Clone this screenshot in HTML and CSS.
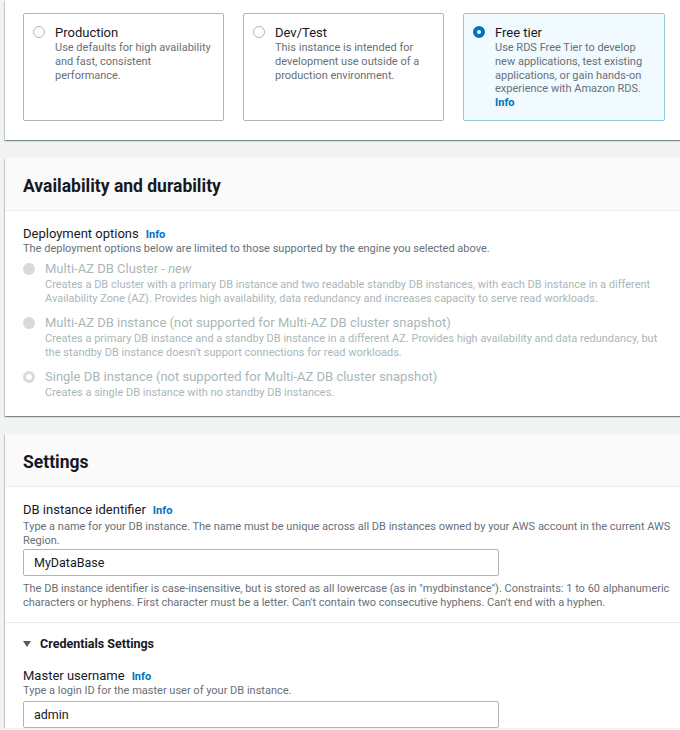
FILE: index.html
```html
<!DOCTYPE html>
<html>
<head>
<meta charset="utf-8">
<link rel="stylesheet" href="styles.css">
</head>
<body>
<div class="page">
  <section class="panel panel-top">
    <div class="tiles">
      <div class="tile">
        <span class="radio"></span>
        <div class="tile-text">
          <div class="tile-title">Production</div>
          <div class="tile-desc">Use defaults for high availability and fast, consistent performance.</div>
        </div>
      </div>
      <div class="tile">
        <span class="radio"></span>
        <div class="tile-text">
          <div class="tile-title">Dev/Test</div>
          <div class="tile-desc">This instance is intended for development use outside of a production environment.</div>
        </div>
      </div>
      <div class="tile tile-selected">
        <span class="radio radio-on"></span>
        <div class="tile-text">
          <div class="tile-title">Free tier</div>
          <div class="tile-desc">Use RDS Free Tier to develop new applications, test existing applications, or gain hands-on experience with Amazon RDS.</div>
          <div class="info">Info</div>
        </div>
      </div>
    </div>
  </section>

  <section class="panel">
    <header class="panel-head"><h2>Availability and durability</h2></header>
    <div class="avail-body">
      <div class="label">Deployment options <span class="info">Info</span></div>
      <div class="desc">The deployment options below are limited to those supported by the engine you selected above.</div>
      <div class="options">
        <div class="option">
          <span class="dradio"></span>
          <div>
            <div class="opt-label">Multi-AZ DB Cluster - <em>new</em></div>
            <div class="opt-desc">Creates a DB cluster with a primary DB instance and two readable standby DB instances, with each DB instance in a different Availability Zone (AZ). Provides high availability, data redundancy and increases capacity to serve read workloads.</div>
          </div>
        </div>
        <div class="option">
          <span class="dradio"></span>
          <div>
            <div class="opt-label">Multi-AZ DB instance (not supported for Multi-AZ DB cluster snapshot)</div>
            <div class="opt-desc">Creates a primary DB instance and a standby DB instance in a different AZ. Provides high availability and data redundancy, but the standby DB instance doesn't support connections for read workloads.</div>
          </div>
        </div>
        <div class="option">
          <span class="dradio dradio-on"></span>
          <div>
            <div class="opt-label">Single DB instance (not supported for Multi-AZ DB cluster snapshot)</div>
            <div class="opt-desc">Creates a single DB instance with no standby DB instances.</div>
          </div>
        </div>
      </div>
    </div>
  </section>

  <section class="panel">
    <header class="panel-head"><h2>Settings</h2></header>
    <div class="settings-body">
      <div class="field">
        <div class="label">DB instance identifier <span class="info">Info</span></div>
        <div class="desc desc-first">Type a name for your DB instance. The name must be unique across all DB instances owned by your AWS account in the current AWS Region.</div>
        <div class="input input-first">MyDataBase</div>
        <div class="desc help">The DB instance identifier is case-insensitive, but is stored as all lowercase (as in "mydbinstance"). Constraints: 1 to 60 alphanumeric characters or hyphens. First character must be a letter. Can't contain two consecutive hyphens. Can't end with a hyphen.</div>
      </div>
      <div class="expander">
        <div class="exp-head"><span class="caret"></span>Credentials Settings</div>
        <div class="field">
          <div class="label">Master username <span class="info">Info</span></div>
          <div class="desc desc-tight">Type a login ID for the master user of your DB instance.</div>
          <div class="input input-gap">admin</div>
        </div>
      </div>
    </div>
  </section>
</div>
</body>
</html>
```

FILE: styles.css
```css
html, body {
  margin: 0;
  padding: 0;
  background: #f2f3f3;
  font-family: Roboto, "Liberation Sans", sans-serif;
  color: #16191f;
  overflow: hidden;
}

.page {
  padding-left: 5px;
  width: 700px;
  display: flex;
  flex-direction: column;
  gap: 18px;
}

.panel {
  background: #fff;
  box-shadow: 0 1px 1px 0 rgba(0, 28, 36, 0.3), 1px 1px 1px 0 rgba(0, 28, 36, 0.15), -1px 1px 1px 0 rgba(0, 28, 36, 0.15);
}

.panel-top {
  padding: 13px 0 19px 18px;
}

.tiles {
  display: grid;
  grid-template-columns: 201px 201px 202px;
  column-gap: 19px;
}

.tile {
  border: 1px solid #aab7b8;
  border-radius: 2px;
  display: flex;
  gap: 10px;
  padding: 10px 0 0 9px;
  box-sizing: border-box;
  height: 108px;
}

.tile-selected {
  background: #f1faff;
  border-color: #8ccbe0;
}

.radio {
  flex: none;
  width: 12px;
  height: 12px;
  margin-top: 2px;
  border: 1px solid #aab7b8;
  border-radius: 50%;
  box-sizing: border-box;
  background: #fff;
}

.radio-on {
  border: 4px solid #0073bb;
}

.tile-title {
  font-size: 13px;
  line-height: 17px;
}

.tile-desc {
  font-size: 11px;
  line-height: 13.8px;
  color: #687078;
  padding-right: 6px;
}

.info {
  color: #0073bb;
  font-weight: 700;
  font-size: 11px;
}

.label {
  font-size: 13px;
  line-height: 16px;
  height: 16px;
  display: flex;
  align-items: baseline;
}

.label .info {
  margin-left: 7px;
  line-height: 16px;
}

.panel-head {
  height: 53px;
  box-sizing: border-box;
  padding-top: 3px;
  background: #fafafa;
  border-bottom: 1px solid #eaeded;
  padding-left: 18px;
  display: flex;
  align-items: center;
}

.panel-head h2 {
  margin: 0;
  font-size: 17.5px;
  font-weight: 700;
}

.avail-body {
  padding: 15px 18px 16px;
}

.desc {
  font-size: 11px;
  line-height: 14px;
  color: #687078;
  padding-right: 6px;
}

.options {
  display: flex;
  flex-direction: column;
  gap: 9px;
  margin-top: 5px;
}

.option {
  display: flex;
  gap: 10px;
  padding-right: 20px;
}

.dradio {
  flex: none;
  width: 12px;
  height: 12px;
  margin-top: 2px;
  border-radius: 50%;
  background: #d5dbdb;
  box-sizing: border-box;
}

.dradio-on {
  background: #fff;
  border: 3px solid #d5dbdb;
}

.opt-label {
  font-size: 13px;
  line-height: 16px;
  color: #aab7b8;
}

.opt-desc {
  font-size: 11px;
  line-height: 14px;
  color: #aab7b8;
  margin-top: 1px;
}

.settings-body {
  padding-top: 15px;
}

.field {
  padding: 0 18px;
}

.field .desc-first {
  margin-top: 2px;
}

.field .desc-tight {
  margin-top: 0;
}

.input {
  width: 476px;
  height: 27px;
  box-sizing: border-box;
  border: 1px solid #aab7b8;
  border-radius: 2px;
  padding-left: 10px;
  font-size: 12.5px;
  line-height: 25px;
}

.input-first {
  margin-top: 1px;
}

.input-gap {
  margin-top: 3px;
}

.field .help {
  margin-top: 6px;
}

.expander {
  margin-top: 12px;
  border-top: 1px solid #eaeded;
  padding-top: 13px;
}

.exp-head {
  padding-left: 18px;
  font-size: 12.5px;
  font-weight: 700;
  line-height: 16px;
  color: #16191f;
  display: flex;
  align-items: center;
  margin-bottom: 16px;
}

.caret {
  width: 0;
  height: 0;
  border-left: 4px solid transparent;
  border-right: 4px solid transparent;
  border-top: 6px solid #545b64;
  margin-right: 9px;
}
```
